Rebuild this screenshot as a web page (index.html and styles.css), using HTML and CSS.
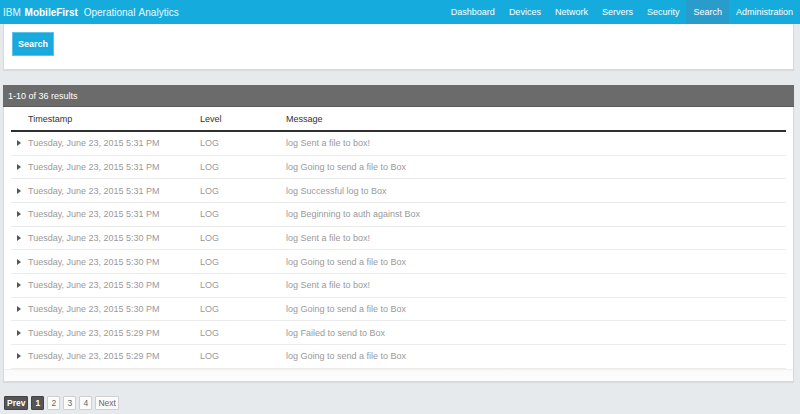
FILE: index.html
```html
<!DOCTYPE html>
<html>
<head>
<meta charset="utf-8">
<link rel="stylesheet" href="styles.css">
</head>
<body>
<header class="topbar">
  <div class="brand"><span class="brand-text"><span class="brand-ibm">IBM</span> <span class="brand-mf">MobileFirst</span> <span class="brand-oa">Operational Analytics</span></span></div>
  <nav class="nav">
    <a class="nav-item">Dashboard</a>
    <a class="nav-item">Devices</a>
    <a class="nav-item">Network</a>
    <a class="nav-item">Servers</a>
    <a class="nav-item">Security</a>
    <a class="nav-item active">Search</a>
    <a class="nav-item">Administration</a>
  </nav>
</header>
<main class="main">
  <section class="panel search-panel">
    <button class="btn-search">Search</button>
  </section>
  <section class="panel results-panel">
    <div class="results-head">1-10 of 36 results</div>
    <div class="results-body">
      <div class="row thead">
        <div class="c c-ts">Timestamp</div>
        <div class="c c-lv">Level</div>
        <div class="c c-msg">Message</div>
      </div>
      <div class="row"><div class="c c-ts"><span class="caret"></span>Tuesday, June 23, 2015 5:31 PM</div><div class="c c-lv">LOG</div><div class="c c-msg">log Sent a file to box!</div></div>
      <div class="row"><div class="c c-ts"><span class="caret"></span>Tuesday, June 23, 2015 5:31 PM</div><div class="c c-lv">LOG</div><div class="c c-msg">log Going to send a file to Box</div></div>
      <div class="row"><div class="c c-ts"><span class="caret"></span>Tuesday, June 23, 2015 5:31 PM</div><div class="c c-lv">LOG</div><div class="c c-msg">log Successful log to Box</div></div>
      <div class="row"><div class="c c-ts"><span class="caret"></span>Tuesday, June 23, 2015 5:31 PM</div><div class="c c-lv">LOG</div><div class="c c-msg">log Beginning to auth against Box</div></div>
      <div class="row"><div class="c c-ts"><span class="caret"></span>Tuesday, June 23, 2015 5:30 PM</div><div class="c c-lv">LOG</div><div class="c c-msg">log Sent a file to box!</div></div>
      <div class="row"><div class="c c-ts"><span class="caret"></span>Tuesday, June 23, 2015 5:30 PM</div><div class="c c-lv">LOG</div><div class="c c-msg">log Going to send a file to Box</div></div>
      <div class="row"><div class="c c-ts"><span class="caret"></span>Tuesday, June 23, 2015 5:30 PM</div><div class="c c-lv">LOG</div><div class="c c-msg">log Sent a file to box!</div></div>
      <div class="row"><div class="c c-ts"><span class="caret"></span>Tuesday, June 23, 2015 5:30 PM</div><div class="c c-lv">LOG</div><div class="c c-msg">log Going to send a file to Box</div></div>
      <div class="row"><div class="c c-ts"><span class="caret"></span>Tuesday, June 23, 2015 5:29 PM</div><div class="c c-lv">LOG</div><div class="c c-msg">log Failed to send to Box</div></div>
      <div class="row"><div class="c c-ts"><span class="caret"></span>Tuesday, June 23, 2015 5:29 PM</div><div class="c c-lv">LOG</div><div class="c c-msg">log Going to send a file to Box</div></div>
      <div class="tfoot"></div>
    </div>
  </section>
  <div class="pager">
    <a class="pg pg-dark">Prev</a>
    <a class="pg pg-dark">1</a>
    <a class="pg">2</a>
    <a class="pg">3</a>
    <a class="pg">4</a>
    <a class="pg">Next</a>
  </div>
</main>
</body>
</html>
```

FILE: styles.css
```css
* { box-sizing: border-box; }
html, body { margin: 0; padding: 0; }
body {
  font-family: "Liberation Sans", Arial, sans-serif;
  background: #e6eaed;
  width: 800px;
  height: 414px;
  overflow: hidden;
}
.topbar {
  height: 24px;
  background: #15acdd;
  display: flex;
  align-items: stretch;
  justify-content: space-between;
  color: #fff;
}
.brand {
  display: flex;
  align-items: center;
  padding-left: 3px;
  font-size: 10px;
}
.brand-text { white-space: nowrap; word-spacing: 1px; }
.brand-ibm { color: #e9f7fc; }
.brand-mf { font-weight: bold; color: #fff; }
.brand-oa { color: #e9f7fc; margin-left: 2px; }
.nav { display: flex; align-items: stretch; }
.nav-item {
  display: flex;
  align-items: center;
  padding: 0 7px;
  font-size: 9px;
  color: #fff;
}
.nav-item.active { background: #2a9ccb; }
.main { padding: 0 6px 0 3px; }
.panel {
  background: #fff;
  border: 1px solid #d6dbdf;
  box-shadow: 0 1px 1px rgba(0,0,0,0.06);
}
.search-panel {
  height: 46px;
  padding: 7px 8px;
  border-top: none;
}
.btn-search {
  width: 42px;
  height: 24px;
  background: #1aa9dd;
  border: 1px solid #5cc3e8;
  color: #fff;
  font-family: "Liberation Sans", Arial, sans-serif;
  font-weight: bold;
  font-size: 9px;
  padding: 0;
  margin-top: 1px;
}
.results-panel { margin-top: 15px; }
.results-head {
  height: 22px;
  background: #6b6b6b;
  border-bottom: 1px solid #5b5b5b;
  color: #fff;
  font-size: 9px;
  display: flex;
  align-items: center;
  padding-left: 5px;
  margin: -1px -1px 0 -1px;
}
.results-body { padding: 0 7px 0 7px; }
.row {
  display: flex;
  align-items: center;
  height: 23.67px;
  border-bottom: 1px solid #ececec;
  font-size: 9px;
  color: #9a9a9a;
}
.row.thead {
  height: 25px;
  border-bottom: 2px solid #2f2f2f;
  color: #333;
  padding-top: 1px;
}
.c { white-space: nowrap; }
.c-ts { width: 189px; padding-left: 17px; position: relative; }
.c-lv { width: 86px; }
.c-msg { flex: 1; }
.caret {
  position: absolute;
  left: 6px;
  top: 50%;
  margin-top: -3px;
  width: 0;
  height: 0;
  border-left: 4px solid #555;
  border-top: 3px solid transparent;
  border-bottom: 3px solid transparent;
}
.tfoot {
  height: 12px;
  border-top: 1px solid #f0f0f0;
  background: linear-gradient(#fafafa, #fdfdfd);
  margin: 0 -7px;
}
.pager {
  display: flex;
  gap: 3px;
  margin-top: 14px;
  padding-left: 1px;
}
.pg {
  height: 14px;
  min-width: 13px;
  padding: 0 2px;
  display: flex;
  align-items: center;
  justify-content: center;
  font-size: 8.5px;
  color: #666;
  background: #fbfbfb;
  border: 1px solid #cfcfcf;
  border-radius: 1px;
}
.pg-dark {
  background: #555;
  border-color: #444;
  color: #fff;
  font-weight: bold;
}
```
